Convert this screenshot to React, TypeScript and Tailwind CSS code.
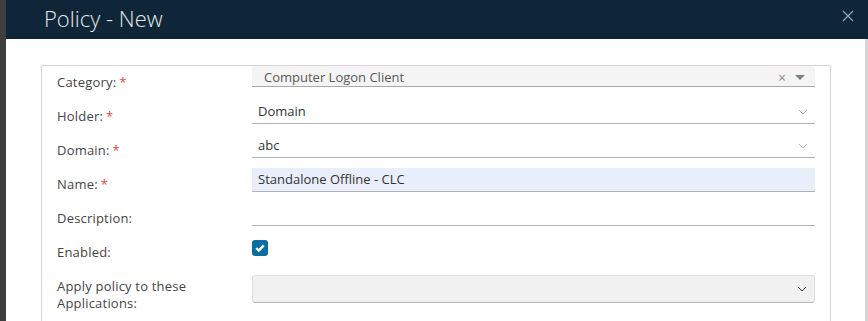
import React from 'react';

const Req = () => <span className="ml-[3px] text-[#e2473d]">*</span>;

const Chevron = ({ className }: { className: string }) => (
  <svg width="10" height="6" viewBox="0 0 10 6" className={className} fill="none" stroke="currentColor">
    <path d="M1 1l4 4 4-4" />
  </svg>
);

const Row: React.FC<{ label: React.ReactNode; children: React.ReactNode; tall?: boolean }> = ({ label, children, tall }) => (
  <div className={`flex ${tall ? 'h-[48px]' : 'h-[34px]'}`}>
    <div className="w-[195px] shrink-0 pt-[8px] text-[13px] font-medium leading-[16px] tracking-[0.2px] text-[#454545]">{label}</div>
    <div className="flex-1">{children}</div>
  </div>
);

const Underlined: React.FC<{ text?: string; chevron?: boolean; filled?: boolean }> = ({ text, chevron, filled }) => (
  <div
    className={`flex h-[24px] items-center justify-between border-b border-[#b1b1b1] pl-[6px] pr-[7px] text-[13px] text-[#333] ${
      filled ? 'bg-[#e8effb]' : ''
    }`}
  >
    <span className="pt-[1px]">{text}</span>
    {chevron && <Chevron className="text-[#b4b4b4]" />}
  </div>
);

export default function App() {
  return (
    <div className="flex h-[321px] w-[868px] overflow-hidden bg-[#3e3e3e] font-['Open_Sans',sans-serif]">
      <div className="w-[6px] shrink-0" />
      <div className="flex flex-1 flex-col bg-white">
        <div className="flex h-[39px] shrink-0 items-center justify-between bg-[#0e2638] pl-[38px] pr-[14px]">
          <h1 className="pb-[4px] text-[22px] font-light leading-none text-[#e6e9eb]">Policy - New</h1>
          <svg width="12" height="12" viewBox="0 0 12 12" className="mb-[8px] text-[#9aa6ae]" stroke="currentColor" strokeWidth="1.2">
            <path d="M1 1l10 10M11 1L1 11" />
          </svg>
        </div>
        <div className="flex flex-1">
          <div className="flex-1 pl-[35px] pr-[34px] pt-[26px]">
            <div className="h-full border border-b-0 border-[#dbd3d7] pl-[15px] pr-[15px]">
              <Row label={<>Category:<Req /></>}>
                <div className="flex h-[21px] items-center justify-between rounded-tr-[4px] border-b border-[#a9a9a9] bg-[#f4f4f4] pl-[12px] pr-[10px] text-[13px] leading-none text-[#595959]">
                  <span className="mt-[3px]">Computer Logon Client</span>
                  <span className="mt-[3px] flex items-center gap-[9px] text-[#8a8a8a]">
                    <span className="text-[14px] leading-none">×</span>
                    <svg width="10" height="5" viewBox="0 0 10 5" fill="#808080">
                      <path d="M0 0h10L5 5z" />
                    </svg>
                  </span>
                </div>
              </Row>
              <Row label={<>Holder:<Req /></>}>
                <Underlined text="Domain" chevron />
              </Row>
              <Row label={<>Domain:<Req /></>}>
                <Underlined text="abc" chevron />
              </Row>
              <Row label={<>Name:<Req /></>}>
                <Underlined text="Standalone Offline - CLC" filled />
              </Row>
              <Row label="Description:">
                <Underlined />
              </Row>
              <Row label="Enabled:">
                <div className="pt-[4px]">
                  <div className="flex h-[16px] w-[16px] items-center justify-center rounded-[3px] bg-[#0b6ea3]">
                    <svg width="10" height="8" viewBox="0 0 10 8" fill="none" stroke="white" strokeWidth="2.4">
                      <path d="M1.2 4l2.6 2.5L8.8 1.3" />
                    </svg>
                  </div>
                </div>
              </Row>
              <Row tall label={<span className="block leading-[17px]">Apply policy to these<br />Applications:</span>}>
                <div className="mt-[5px] flex h-[28px] items-center justify-end rounded-[3px] border border-[#e1e1e1] border-b-[#b5b5b5] bg-[#f1f1f1] pr-[7px]">
                  <Chevron className="text-[#333]" />
                </div>
              </Row>
            </div>
          </div>
          <div className="w-[3px] shrink-0 bg-[#d5d5d5]" />
        </div>
      </div>
    </div>
  );
}
